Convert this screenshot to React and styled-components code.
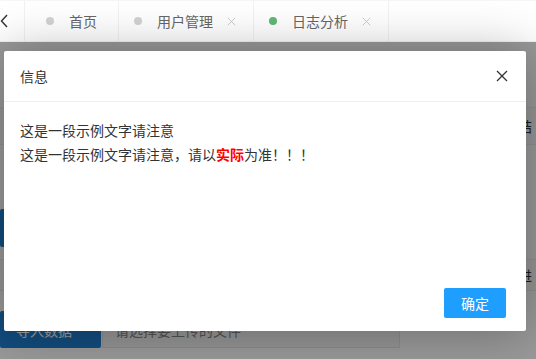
import React from "react";
import styled, { createGlobalStyle } from "styled-components";

const GlobalStyle = createGlobalStyle`
  html, body {
    margin: 0;
    padding: 0;
    background: #fff;
  }
  body {
    font-family: "Noto Sans CJK SC", "Noto Sans", sans-serif;
    font-size: 14px;
    color: #333;
  }
`;

const Page = styled.div`
  width: 536px;
  height: 359px;
  display: flex;
  flex-direction: column;
  overflow: hidden;
`;

const TabBar = styled.div`
  flex-shrink: 0;
  display: flex;
  align-items: stretch;
  border-top: 1px solid #f6f6f6;
  border-bottom: 1px solid #f2f2f2;
  box-sizing: border-box;
  height: 42px;
  background: #fff;
`;

const PrevBtn = styled.div`
  width: 24px;
  display: flex;
  align-items: center;
  border-right: 1px solid #f2f2f2;
  color: #333;
`;

const Tab = styled.div`
  display: flex;
  align-items: center;
  padding: 0 ${(p) => (p.$first ? 21 : 17)}px 0 ${(p) => (p.$first ? 21 : 15)}px;
  border-right: 1px solid #f2f2f2;
  color: #666;
  font-size: 14px;
`;

const Dot = styled.span`
  width: 8px;
  height: 8px;
  margin-right: 15px;
  border-radius: 50%;
  background: ${(p) => (p.$active ? "#5fb878" : "#d2d2d2")};
`;

const TabClose = styled.span`
  color: #c2c2c2;
  display: flex;
  margin-left: 14px;
`;

const Content = styled.div`
  position: relative;
  flex: 1;
  background: #fff;
`;

const BackRow = styled.div`
  display: grid;
  grid-template-columns: 518px 1fr;
  align-items: center;
  height: ${(p) => p.$h}px;
  margin-top: ${(p) => p.$mt}px;
  border-top: 1px solid #eee;
  border-bottom: 1px solid #eee;
  background: #fafafa;
  color: #333;
  white-space: nowrap;
  overflow: hidden;
`;

const FormRow = styled.div`
  display: flex;
  height: ${(p) => p.$h}px;
  margin-top: ${(p) => p.$mt}px;
`;

const BlueBtn = styled.div`
  width: ${(p) => p.$w}px;
  background: #1e7fd0;
  color: #fff;
  display: flex;
  align-items: center;
  padding-left: 16px;
  box-sizing: border-box;
  border-radius: 2px;
`;

const FakeInput = styled.div`
  width: 298px;
  margin-left: 1px;
  background: #f7f7f7;
  border: 1px solid #e6e6e6;
  box-sizing: border-box;
  color: #888;
  display: flex;
  align-items: center;
  padding-left: 12px;
`;

const Overlay = styled.div`
  position: absolute;
  inset: 0;
  background: rgba(0, 0, 0, 0.4);
`;

const Modal = styled.div`
  position: absolute;
  left: 4px;
  top: 9px;
  width: 522px;
  height: 280px;
  background: #fff;
  border-radius: 2px;
  box-shadow: 1px 1px 50px rgba(0, 0, 0, 0.3);
  display: flex;
  flex-direction: column;
`;

const ModalHead = styled.div`
  height: 50px;
  flex-shrink: 0;
  display: flex;
  align-items: center;
  justify-content: space-between;
  padding: 0 18px 0 16px;
  border-bottom: 1px solid #eee;
  font-size: 14px;
  color: #333;
`;

const CloseX = styled.span`
  display: flex;
  color: #333;
`;

const ModalBody = styled.div`
  flex: 1;
  padding: 16px 16px;
  line-height: 24px;
  font-size: 14px;
  color: #333;
`;

const Strong = styled.b`
  color: #f00;
`;

const ModalFoot = styled.div`
  display: flex;
  justify-content: flex-end;
  padding: 0 20px 13px;
`;

const OkBtn = styled.div`
  height: 30px;
  line-height: 30px;
  width: 62px;
  text-align: center;
  background: #1e9fff;
  color: #fff;
  border-radius: 2px;
  font-size: 14px;
`;

const Cross = ({ size, width = 1.2 }) => (
  <svg width={size} height={size} viewBox="0 0 12 12">
    <path d="M1 1L11 11M11 1L1 11" stroke="currentColor" strokeWidth={width} fill="none" />
  </svg>
);

const tabs = [
  { name: "首页" },
  { name: "用户管理", close: true },
  { name: "日志分析", close: true, active: true },
];

export default function App() {
  return (
    <Page>
      <GlobalStyle />
      <TabBar>
        <PrevBtn>
          <svg width="9" height="14" viewBox="0 0 9 14">
            <path d="M7 1L1.5 7L7 13" stroke="#333" strokeWidth="1.4" fill="none" />
          </svg>
        </PrevBtn>
        {tabs.map((t, i) => (
          <Tab key={t.name} $first={i === 0}>
            <Dot $active={t.active} />
            <span>{t.name}</span>
            {t.close && (
              <TabClose>
                <Cross size={9} width={1.1} />
              </TabClose>
            )}
          </Tab>
        ))}
      </TabBar>
      <Content>
        <BackRow $h={36} $mt={65}>
          <span />
          <span>结</span>
        </BackRow>
        <FormRow $h={38} $mt={64}>
          <BlueBtn $w={100}>查询</BlueBtn>
        </FormRow>
        <BackRow $h={30} $mt={12}>
          <span />
          <span>进</span>
        </BackRow>
        <FormRow $h={37} $mt={20}>
          <BlueBtn $w={101}>导入数据</BlueBtn>
          <FakeInput>请选择要上传的文件</FakeInput>
        </FormRow>
        <Overlay />
        <Modal>
          <ModalHead>
            <span>信息</span>
            <CloseX>
              <Cross size={12} width={1.3} />
            </CloseX>
          </ModalHead>
          <ModalBody>
            <div>这是一段示例文字请注意</div>
            <div>
              这是一段示例文字请注意，请以<Strong>实际</Strong>为准！！！
            </div>
          </ModalBody>
          <ModalFoot>
            <OkBtn>确定</OkBtn>
          </ModalFoot>
        </Modal>
      </Content>
    </Page>
  );
}
